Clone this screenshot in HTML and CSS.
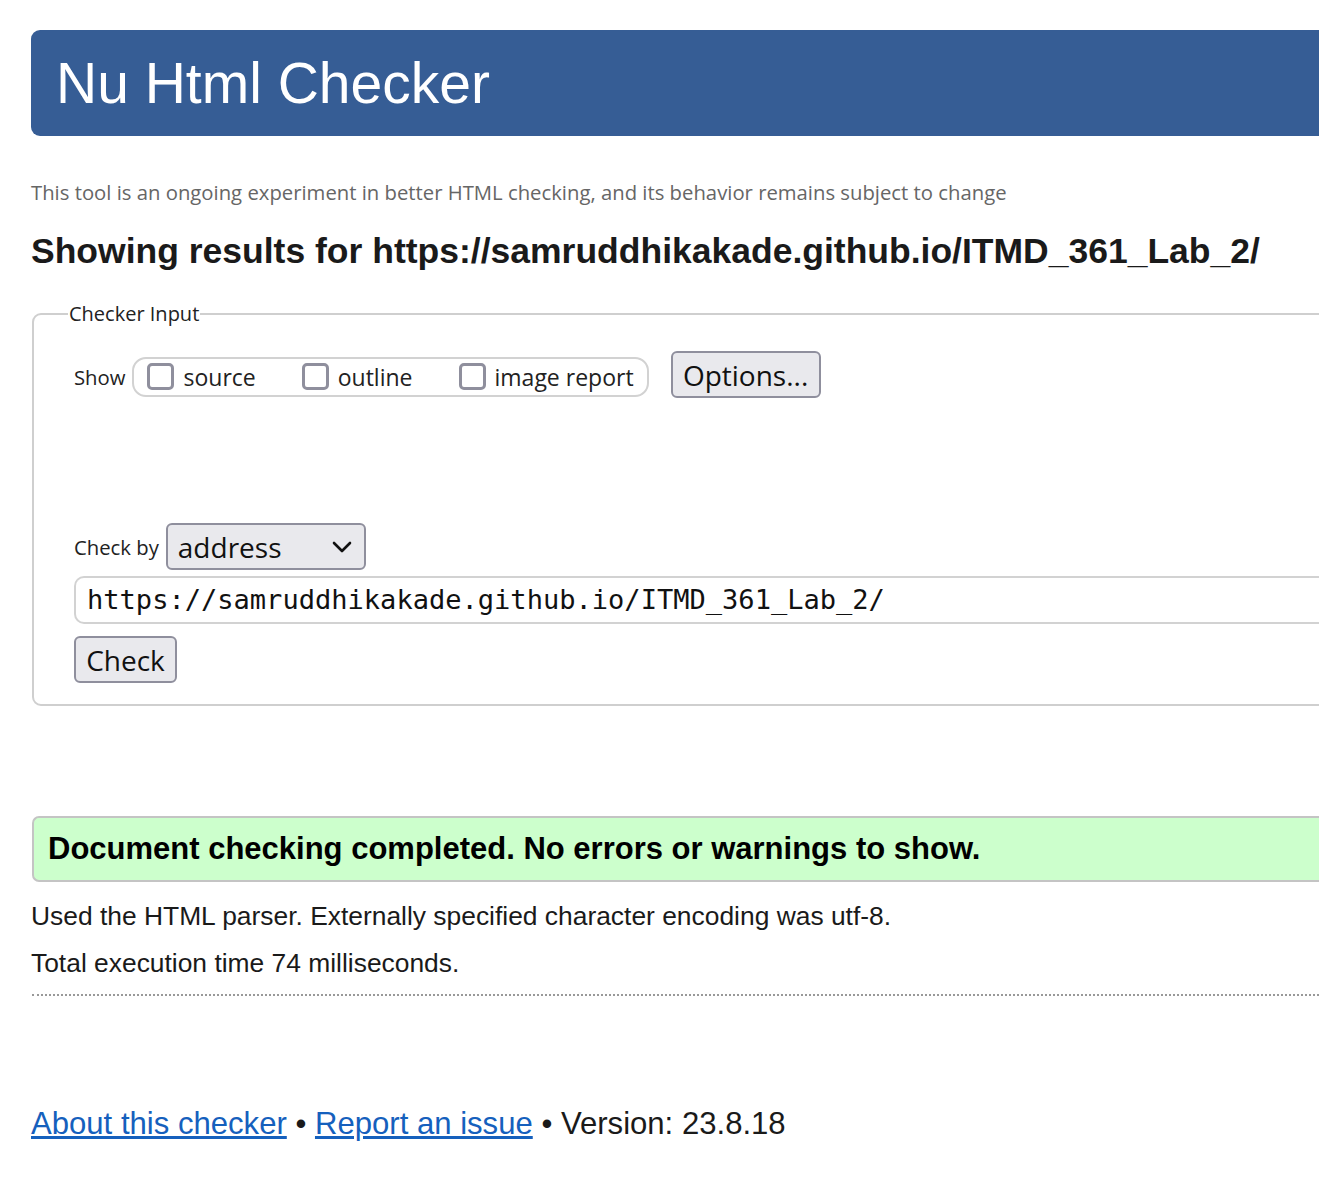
FILE: index.html
```html
<!DOCTYPE html>
<html lang="en">
<head>
<meta charset="utf-8">
<title>Nu Html Checker</title>
<link rel="stylesheet" href="styles.css">
</head>
<body>
<div class="page">
  <h1 class="banner">Nu Html Checker</h1>
  <p class="note">This tool is an ongoing experiment in better HTML checking, and its behavior remains subject to change</p>
  <h2 class="results">Showing results for https://samruddhikakade.github.io/ITMD_361_Lab_2/</h2>
  <fieldset class="input">
    <legend class="legend">Checker Input</legend>
    <div class="show-row">
      <span class="lbl">Show</span>
      <div class="pill">
        <label class="cb"><span class="box"></span>source</label>
        <label class="cb"><span class="box"></span>outline</label>
        <label class="cb"><span class="box"></span>image report</label>
      </div>
      <button class="btn opt">Options...</button>
    </div>
    <div class="checkby-row">
      <span class="lbl">Check by</span>
      <div class="select">address
        <svg class="chev" width="20" height="12" viewBox="0 0 20 12"><path d="M2 2 L10 10 L18 2" fill="none" stroke="#111" stroke-width="2.6" stroke-linecap="round" stroke-linejoin="round"/></svg>
      </div>
    </div>
    <div class="url">https://samruddhikakade.github.io/ITMD_361_Lab_2/</div>
    <button class="btn check">Check</button>
  </fieldset>
  <div class="success">Document checking completed. No errors or warnings to show.</div>
  <p class="info">Used the HTML parser. Externally specified character encoding was utf-8.</p>
  <p class="info">Total execution time 74 milliseconds.</p>
  <hr class="dots">
  <p class="footer"><a href="#">About this checker</a> • <a href="#">Report an issue</a> • Version: 23.8.18</p>
</div>
</body>
</html>
```
FILE: styles.css
```css
html, body {
  margin: 0;
  padding: 0;
  overflow: hidden;
  background: #fff;
}
.page {
  width: 1400px;
  padding-left: 31px;
  padding-top: 30px;
  font-family: "Liberation Sans", Arial, sans-serif;
  color: #111;
}
.banner {
  margin: 0;
  height: 106px;
  box-sizing: border-box;
  background: #365d95;
  color: #fff;
  border-radius: 9px 0 0 9px;
  font-weight: normal;
  font-size: 57px;
  line-height: 106px;
  padding-left: 25px;
}
.note {
  margin: 40px 0 0 0;
  font-family: "Open Sans", sans-serif;
  font-size: 20.3px;
  line-height: 32px;
  color: #666;
}
.results {
  margin: 21px 0 0 0;
  font-size: 35.5px;
  line-height: 44px;
  font-weight: bold;
  color: #1a1a1a;
}
.input {
  margin: 27px 0 0 1px;
  border: 2px solid #cfcfcf;
  border-radius: 9px 0 0 9px;
  padding: 18px 0 24px 40px;
  height: 406px;
  box-sizing: border-box;
  font-family: "Open Sans", sans-serif;
}
.legend {
  font-size: 20px;
  color: #222;
  padding: 0 1px;
  margin-left: -6px;
}
.lbl {
  font-size: 20.3px;
  color: #222;
}
.show-row {
  display: flex;
  align-items: center;
  margin-top: 10px;
}
.pill {
  display: flex;
  align-items: center;
  gap: 46px;
  margin-left: 7px;
  height: 40px;
  box-sizing: border-box;
  border: 2px solid #d2d2d2;
  border-radius: 14px;
  padding: 0 13px 0 13px;
}
.cb {
  display: flex;
  align-items: center;
  gap: 9px;
  font-size: 23px;
  color: #222;
}
.box {
  width: 27px;
  height: 27px;
  box-sizing: border-box;
  border: 3px solid #8f8f9d;
  border-radius: 5px;
  background: #fff;
}
.btn {
  font-family: "Open Sans", sans-serif;
  background: #e9e9ed;
  border: 2px solid #8f8f9d;
  border-radius: 6px;
  color: #111;
  font-size: 28px;
  padding: 0 8px;
  height: 47px;
  line-height: 40px;
}
.opt {
  margin-left: 22px;
  margin-top: -4px;
  width: 150px;
}
.checkby-row {
  display: flex;
  align-items: center;
  margin-top: 125px;
}
.select {
  margin-left: 7px;
  width: 200px;
  height: 47px;
  box-sizing: border-box;
  background: #e9e9ed;
  border: 2px solid #8f8f9d;
  border-radius: 6px;
  font-size: 28px;
  display: flex;
  align-items: center;
  justify-content: space-between;
  padding: 0 12px 0 10px;
  color: #111;
}
.url {
  margin-top: 6px;
  height: 48px;
  box-sizing: border-box;
  border: 2px solid #d2d2d2;
  border-right: none;
  border-radius: 10px 0 0 10px;
  font-family: "DejaVu Sans Mono", monospace;
  font-size: 27.05px;
  line-height: 44px;
  padding-left: 11px;
  color: #111;
}
.check {
  margin-top: 12px;
  width: 103px;
  padding: 0;
}
.success {
  margin-top: 110px;
  margin-left: 1px;
  height: 66px;
  box-sizing: border-box;
  background: #ccffcc;
  border: 2px solid #c4c4c4;
  border-right: none;
  border-radius: 7px 0 0 7px;
  font-weight: bold;
  font-size: 31px;
  line-height: 62px;
  padding-left: 14px;
  color: #000;
}
.info {
  margin: 0;
  font-size: 26.4px;
  line-height: 28px;
  color: #1a1a1a;
}
.success + .info { margin-top: 20px; }
.info + .info { margin-top: 19px; }
.dots {
  margin: 17px 0 0 1px;
  border: none;
  border-top: 2px dotted #999;
  height: 0;
}
.footer {
  margin: 110px 0 0 0;
  font-size: 31.1px;
  color: #1a1a1a;
}
.footer a {
  color: #1560bd;
}
```
